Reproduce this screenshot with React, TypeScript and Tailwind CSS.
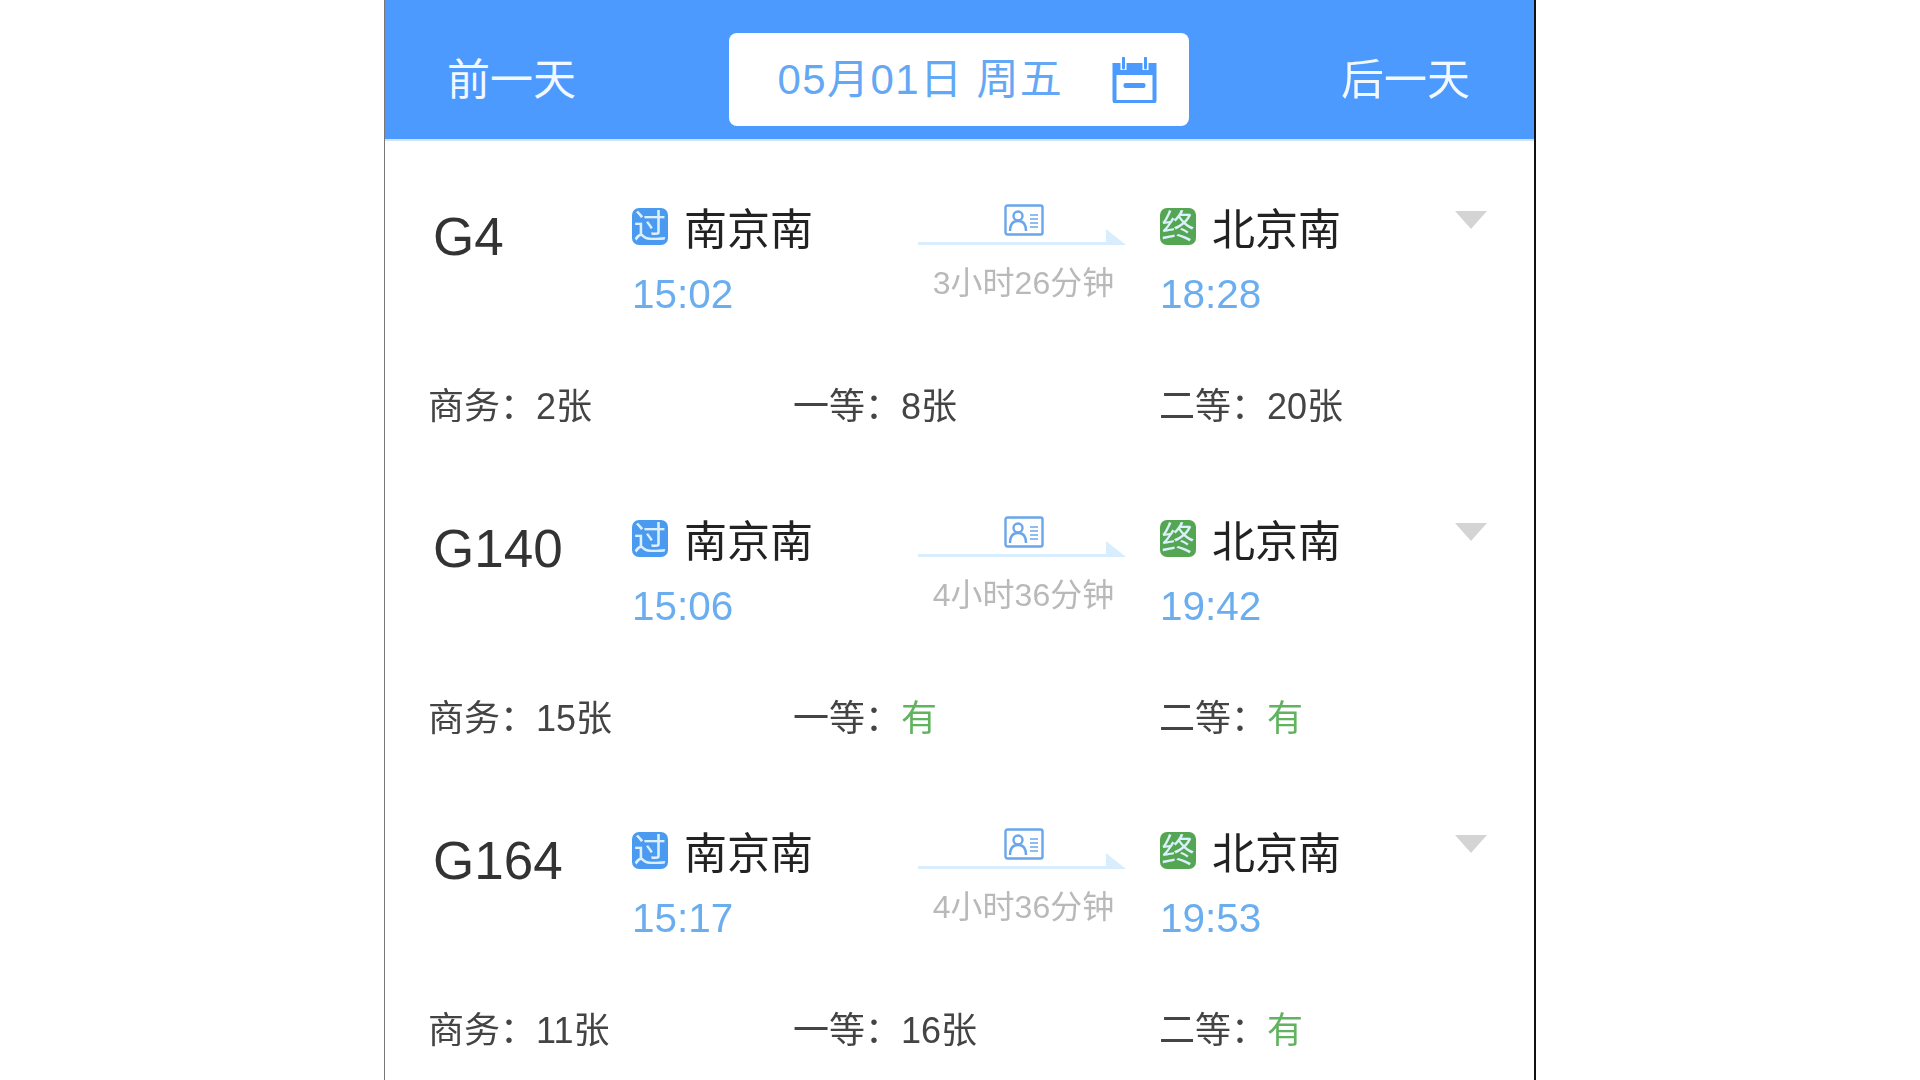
const font = "[font-family:'Liberation_Sans','Noto_Sans_CJK_SC',sans-serif]";

function Calendar() {
  return (
    <svg width="47" height="46" viewBox="0 0 46 46" fill="none" className="ml-[48px]">
      <path d="M3 8h40v35a2 2 0 0 1-2 2H5a2 2 0 0 1-2-2V8z" fill="none" stroke="#4d9aff" strokeWidth="4" />
      <path d="M3 7h40v11H3z" fill="#4d9aff" />
      <path d="M12 1v12M34 1v12" stroke="#fff" strokeWidth="6" />
      <path d="M12 1v10M34 1v10" stroke="#4d9aff" strokeWidth="3" strokeLinecap="round" />
      <rect x="12" y="26" width="22" height="5" rx="2" fill="#4d9aff" />
    </svg>
  );
}

function Badge({ text, color }: { text: string; color: string }) {
  return (
    <span className={`mb-[5px] flex h-[37px] w-[36px] items-center justify-center rounded-[7px] text-[33px] leading-none text-[#dcefff] ${color}`}>
      {text}
    </span>
  );
}

function IdCard() {
  return (
    <svg width="40" height="32" viewBox="0 0 40 32" fill="none" className="ml-[3px]">
      <rect x="1.5" y="1.5" width="37" height="29" rx="2" stroke="#6ba6ea" strokeWidth="2.4" />
      <circle cx="14" cy="12" r="4.5" stroke="#6ba6ea" strokeWidth="2.4" />
      <path d="M6 27c0-7 3-10 8-10s8 3 8 10" stroke="#6ba6ea" strokeWidth="2.4" />
      <path d="M26 11h8M26 15h8M26 19h8M26 23h8" stroke="#8fbcee" strokeWidth="1.8" />
    </svg>
  );
}

function Arrow() {
  return (
    <svg width="208" height="20" viewBox="0 0 208 20" className="-mt-[7px] block">
      <path d="M0 16h208l-20-16v13H0z" fill="#d8edfd" />
    </svg>
  );
}

function Seat({ label, value, width }: { label: string; value: string; width: string }) {
  const has = value === "有";
  return (
    <div className={`flex items-center text-[36px] leading-none text-[#444] ${width}`}>
      <span>{label}：</span>
      <span className={has ? "text-[#62b35f]" : ""}>{value}</span>
    </div>
  );
}

function parseSeat(s: string, i: number) {
  const labels = ["商务", "一等", "二等"];
  return { label: labels[i], value: s.split("|")[i] };
}

function Train({ no, to, dur, s1, s2, s3 }: { no: string; to: string; dur: string; s1: string; s2: string; s3: string }) {
  return (
    <div className="h-[312px] pl-[45px]">
      <div className="flex h-[226px]">
        <div className="w-[202px] pl-[3px] pt-[64px] text-[53px] leading-[64px] text-[#333]">{no}</div>
        <div className="w-[287px] pt-[67px]">
          <div className="flex items-center">
            <span className="-mt-[2px]"><Badge text="过" color="bg-[#4a9bf0]" /></span>
            <span className="ml-[16px] text-[43px] leading-[44px] text-[#222]">南京南</span>
          </div>
          <div className="mt-[20px] text-[40.5px] leading-[44px] text-[#6aaef0]">{s1}</div>
        </div>
        <div className="flex w-[241px] flex-col items-center pt-[63px] pr-[35px]">
          <IdCard />
          <Arrow />
          <div className="mt-[16px] ml-[3px] text-[32px] leading-[36px] whitespace-nowrap text-[#b9b9b9]">{dur}</div>
        </div>
        <div className="w-[295px] pt-[67px]">
          <div className="flex items-center">
            <span className="-mt-[2px]"><Badge text="终" color="bg-[#55a653]" /></span>
            <span className="ml-[16px] text-[43px] leading-[44px] text-[#222]">{to}</span>
          </div>
          <div className="mt-[20px] text-[40.5px] leading-[44px] text-[#6aaef0]">{s2}</div>
        </div>
        <svg width="32" height="18" viewBox="0 0 32 18" className="mt-[70px]">
          <path d="M0 0h32L16 18z" fill="#d4d4d4" />
        </svg>
      </div>
      <div className="-ml-[2px] flex pt-[22px]">
        <Seat {...parseSeat(s3, 0)} width="w-[365px]" />
        <Seat {...parseSeat(s3, 1)} width="w-[366px]" />
        <Seat {...parseSeat(s3, 2)} width="w-[300px]" />
      </div>
    </div>
  );
}

const trains = [
  { no: "G4", to: "北京南", dur: "3小时26分钟", s1: "15:02", s2: "18:28", s3: "2张|8张|20张" },
  { no: "G140", to: "北京南", dur: "4小时36分钟", s1: "15:06", s2: "19:42", s3: "15张|有|有" },
  { no: "G164", to: "北京南", dur: "4小时36分钟", s1: "15:17", s2: "19:53", s3: "11张|16张|有" },
];

export default function App() {
  return (
    <div className={`h-[1080px] w-[1920px] overflow-hidden bg-white ${font}`}>
      <div className="mx-auto h-full w-[1152px] border-l border-r-2 border-l-[#777] border-r-[#111] blur-[0.6px]">
        <div className="flex h-[141px] items-center justify-between border-b-2 border-b-[#cfe3fb] bg-[#4d9aff] pl-[62px] pr-[64px] pt-[20px]">
          <span className="mt-[2px] text-[43px] leading-none text-[#f3f8ff]">前一天</span>
          <div className="flex h-[93px] w-[460px] items-center rounded-[8px] bg-white pl-[49px]">
            <span className="text-[42px] leading-none tracking-[1.4px] whitespace-pre text-[#64a8f5]">05月01日 周五</span>
            <Calendar />
          </div>
          <span className="mt-[2px] text-[43px] leading-none text-[#f3f8ff]">后一天</span>
        </div>
        {trains.map((t) => (
          <Train key={t.no} {...t} />
        ))}
      </div>
    </div>
  );
}
